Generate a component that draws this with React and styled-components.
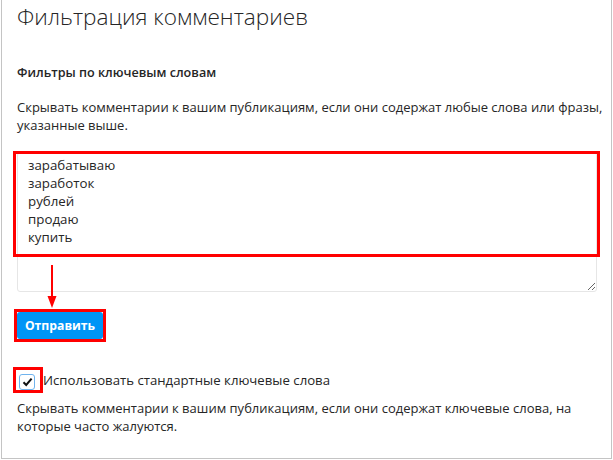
import React from 'react';
import styled, { createGlobalStyle } from 'styled-components';

const GlobalStyle = createGlobalStyle`
  html, body {
    margin: 0;
    padding: 0;
    background: #ffffff;
  }
  body {
    font-family: "Open Sans", "Noto Sans", sans-serif;
    color: #262626;
  }
`;

const Frame = styled.div`
  box-sizing: border-box;
  width: 611px;
  height: 459px;
  margin-left: 1px;
  border: 1px solid #c4c4c4;
  border-top: none;
  padding: 0 14px 0 15px;
  display: flex;
  flex-direction: column;
  overflow: hidden;
`;

const Title = styled.h1`
  margin: 1px 0 0;
  font-size: 22.6px;
  font-weight: 300;
  line-height: 32px;
  color: #262626;
`;

const SubHeading = styled.h2`
  margin: 31px 0 0;
  font-size: 12.6px;
  font-weight: 600;
  line-height: 18px;
`;

const Hint = styled.p`
  margin: ${(p) => p.$top || 0}px -6px 0 0;
  font-size: 13px;
  line-height: 18px;
`;

const FieldWrap = styled.div`
  position: relative;
  margin-top: 18px;
`;

const KeywordsArea = styled.textarea`
  box-sizing: border-box;
  display: block;
  width: 100%;
  height: 140px;
  padding: 3px 10px;
  border: 1px solid #e6e6e6;
  border-radius: 3px;
  font-family: "Open Sans", "Noto Sans", sans-serif;
  font-size: 13.3px;
  line-height: 18px;
  color: #262626;
  resize: vertical;
  outline: none;
`;

const Highlight = styled.div`
  position: absolute;
  left: -4px;
  right: -3px;
  top: -1px;
  height: 106px;
  border: 3px solid #ff0000;
  box-sizing: border-box;
  pointer-events: none;
`;

const Arrow = styled.svg`
  position: absolute;
  left: 28px;
  top: 113px;
  overflow: visible;
`;

const Marked = styled.div`
  display: inline-flex;
  align-self: flex-start;
  border: 3px solid #ff0000;
  margin: ${(p) => p.$top || 0}px 0 0 ${(p) => p.$left || 0}px;
  padding: ${(p) => p.$pad || 0};
`;

const SendButton = styled.button`
  height: 27px;
  width: 86px;
  border: none;
  border-radius: 3px;
  background: #0095f6;
  color: #ffffff;
  font-family: "Open Sans", "Noto Sans", sans-serif;
  font-size: 12.2px;
  font-weight: 700;
  padding: 0;
  cursor: pointer;
`;

const CheckRow = styled.label`
  display: flex;
  align-items: center;
  margin-top: 25px;
  margin-left: -4px;
  font-size: 13.2px;
  line-height: 19px;
`;

const Box = styled.span`
  box-sizing: border-box;
  width: 16px;
  height: 16px;
  border: 1px solid #6fb3ee;
  border-radius: 3px;
  background: #fff;
  display: flex;
  align-items: center;
  justify-content: center;
`;

export default function App() {
  return (
    <>
      <GlobalStyle />
      <Frame>
        <Title>Фильтрация комментариев</Title>
        <SubHeading>Фильтры по ключевым словам</SubHeading>
        <Hint $top={16}>
          Скрывать комментарии к вашим публикациям, если они содержат любые слова или фразы,
          указанные выше.
        </Hint>
        <FieldWrap>
          <KeywordsArea
            defaultValue={'зарабатываю\nзаработок\nрублей\nпродаю\nкупить'}
          />
          <Highlight />
          <Arrow width="14" height="44" viewBox="0 0 14 44">
            <line x1="7" y1="0" x2="7" y2="34" stroke="#ff0000" strokeWidth="2" />
            <polygon points="2.5,31 11.5,31 7,43" fill="#ff0000" />
          </Arrow>
        </FieldWrap>
        <Marked $top={17} $left={-3}>
          <SendButton>Отправить</SendButton>
        </Marked>
        <CheckRow>
          <Marked $pad="4px 5px 0 3px">
            <Box>
              <svg width="11" height="10" viewBox="0 0 11 10">
                <path d="M1.5 5.2 L4.2 8 L9.6 1.6" fill="none" stroke="#111" strokeWidth="2" />
              </svg>
            </Box>
          </Marked>
          <span>Использовать стандартные ключевые слова</span>
        </CheckRow>
        <Hint $top={6}>
          Скрывать комментарии к вашим публикациям, если они содержат ключевые слова, на
          которые часто жалуются.
        </Hint>
      </Frame>
    </>
  );
}
